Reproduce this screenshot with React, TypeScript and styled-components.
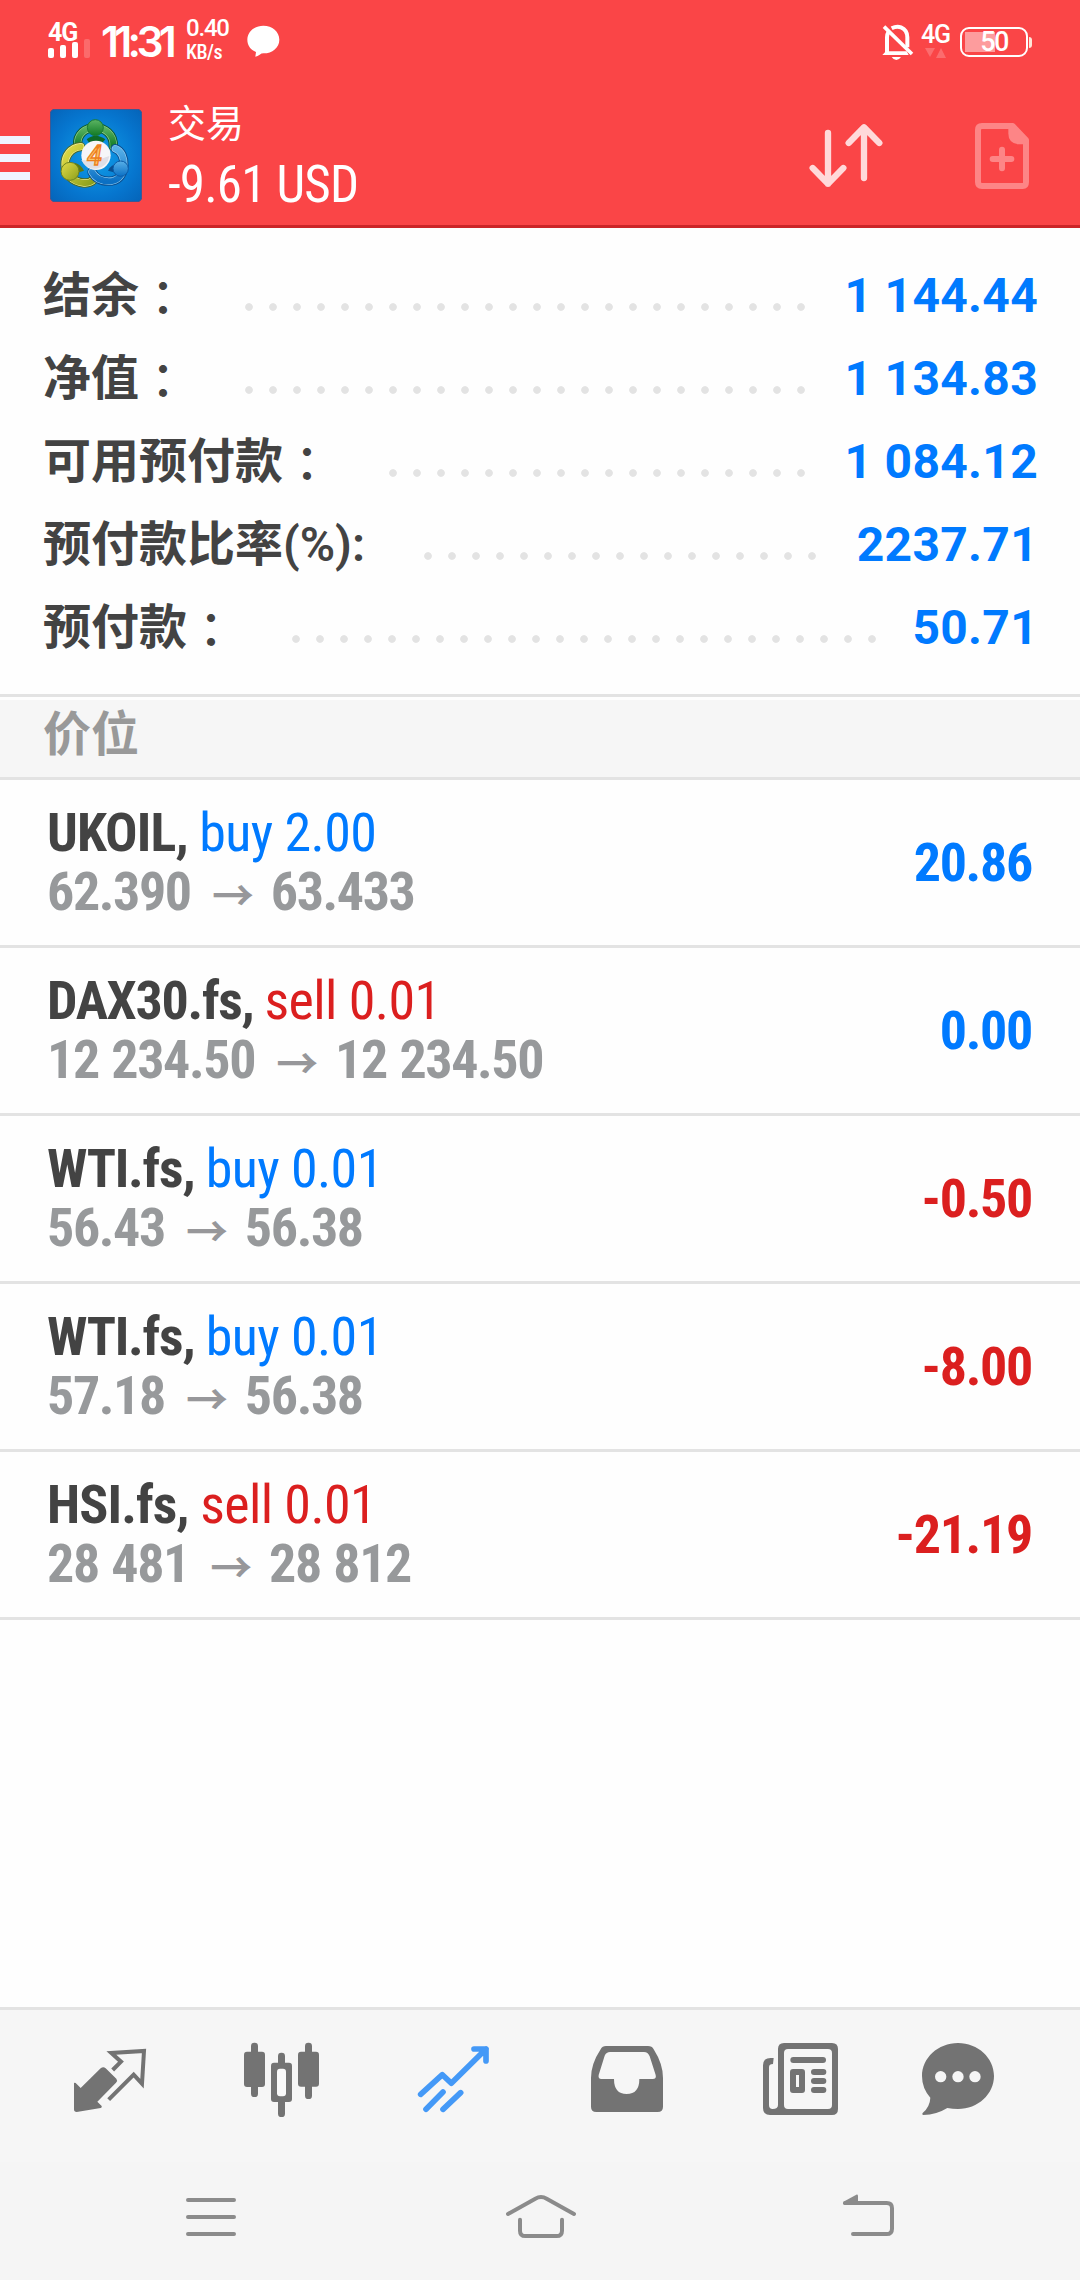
import React from "react";
import styled, { createGlobalStyle } from "styled-components";

const sans = `Roboto, "Noto Sans CJK SC", sans-serif`;
const condensed = `"Roboto Condensed", "Noto Sans CJK SC", sans-serif`;
const blue = "#007aff";
const red = "#db1f1f";
const ink = "#434343";
const line = "#e3e3e3";

const Global = createGlobalStyle`
  * { box-sizing: border-box; }
  body { margin: 0; background: #fefefe; font-family: ${sans}; }
  svg { display: block; flex: none; }
`;

const Screen = styled.div`
  display: flex;
  flex-direction: column;
  width: 1080px;
  height: 2280px;
  background: #fefefe;
`;

/* ---------- header ---------- */

const Header = styled.header`
  height: 228px;
  background: #fa4547;
  border-bottom: 3px solid #cb2528;
  color: #fff;
`;

const StatusBar = styled.div`
  display: flex;
  align-items: flex-start;
  height: 84px;
  padding: 17px 48px 0 48px;
`;

const Signal = styled.div`
  width: 53px;
  padding-top: 5px;
`;

const NetLabel = styled.div<{ $weight: number }>`
  font: ${(p) => p.$weight} 25px/22px Roboto, sans-serif;
  letter-spacing: -1.2px;
`;

const Bars = styled.div`
  display: flex;
  align-items: flex-end;
  gap: 6px;
  height: 14px;
`;

const Bar = styled.i<{ $h: number; $dim?: boolean }>`
  width: 6px;
  height: ${(p) => p.$h}px;
  border-radius: 2px;
  background: #fff;
  opacity: ${(p) => (p.$dim ? 0.2 : 1)};
`;

const Clock = styled.div`
  width: 85px;
  padding-top: 2px;
  font: 600 42.5px/46px Inter, Roboto, sans-serif;
  letter-spacing: -4.7px;
  white-space: nowrap;
`;

const Speed = styled.div`
  display: flex;
  flex-direction: column;
  width: 61px;
`;

const SpeedValue = styled.span`
  font: 500 24px/23px Roboto, sans-serif;
  letter-spacing: -1.2px;
`;

const SpeedUnit = styled.span`
  font: 500 20px/24px ${condensed};
  letter-spacing: -0.5px;
`;

const ChatMark = styled.div`
  padding-top: 8px;
`;

const StatusRight = styled.div`
  display: flex;
  align-items: flex-start;
  margin-left: auto;
`;

const DataLabel = styled.div`
  width: 39px;
  margin-left: 7px;
  padding-top: 7px;
`;

const Battery = styled.div`
  display: flex;
  align-items: center;
  justify-content: center;
  width: 68px;
  height: 30px;
  margin-top: 10px;
  border: 2px solid #fff;
  border-radius: 9px;
  background: linear-gradient(#fd9c9d, #fd9c9d) 3px 3px / 30px 20px no-repeat;
  font: 500 27px/26px Roboto, sans-serif;
  letter-spacing: -1.5px;
`;

const BatteryTip = styled.i`
  width: 3px;
  height: 11px;
  margin: 20px 0 0 1px;
  border-radius: 0 3px 3px 0;
  background: #ffe6d8;
`;

const Toolbar = styled.div`
  display: flex;
  align-items: flex-start;
  height: 141px;
  padding: 16px 45px 0 0;
`;

const Burger = styled.div`
  display: flex;
  flex-direction: column;
  gap: 10px;
  width: 30px;
  margin: 36px 20px 0 0;
`;

const BurgerLine = styled.i`
  height: 8px;
  background: #f0f4ff;
`;

const LogoFrame = styled.div`
  padding-top: 9px;
`;

const Titles = styled.div`
  display: flex;
  flex-direction: column;
  margin: 1px 0 0 26px;
`;

const Title = styled.h1`
  margin: 0;
  font: 400 38px/46px ${sans};
`;

const Total = styled.div`
  margin-top: 4px;
  font: 400 51px/68px ${condensed};
  letter-spacing: -0.8px;
`;

const Actions = styled.div`
  display: flex;
  gap: 89px;
  margin: 0 6px 0 auto;
  padding-top: 14px;
`;

/* ---------- account summary ---------- */

const Summary = styled.section`
  padding: 26px 42px 25px 43px;
  border-bottom: 3px solid ${line};
`;

const SummaryRow = styled.div`
  display: flex;
  height: 83px;
  font: 700 48px/83px ${sans};
`;

const SummaryLabel = styled.span`
  font-weight: 600;
  color: ${ink};
`;

const WideColon = styled.span`
  font-family: "Noto Sans CJK TC", sans-serif;
  font-weight: 500;
  line-height: 1;
  vertical-align: -4px;
`;

const Leader = styled.span<{ $dots: number; $gap: number }>`
  width: ${(p) => p.$dots * 24}px;
  height: 24px;
  margin: 41px ${(p) => p.$gap}px 0 auto;
  background: radial-gradient(circle at center, #e3e3e3 3.4px, transparent 4.2px) 0 0 / 24px 24px;
`;

const SummaryValue = styled.span`
  color: ${blue};
  letter-spacing: 0.3px;
`;

/* ---------- positions ---------- */

const SectionTitle = styled.h2`
  height: 80px;
  margin: 3px 0 0;
  padding: 0 43px;
  border-bottom: 3px solid ${line};
  background: #f6f6f6;
  color: #999;
  font: 600 48px/70px ${sans};
`;

const PositionRow = styled.div`
  display: flex;
  justify-content: space-between;
  height: 168px;
  padding: 0 48px 0 47px;
  border-bottom: 3px solid ${line};
  font-family: ${condensed};
`;

const PositionInfo = styled.div`
  padding-top: 23px;
`;

const Instrument = styled.div<{ $tracking: number }>`
  color: ${ink};
  font-size: 54px;
  font-weight: 700;
  line-height: 59px;
  letter-spacing: ${(p) => p.$tracking}px;
`;

const Deal = styled.span<{ $side: string }>`
  color: ${(p) => (p.$side === "buy" ? blue : red)};
  font-weight: 400;
  letter-spacing: -0.6px;
`;

const Prices = styled.div`
  display: flex;
  color: #97999b;
  font-size: 54px;
  font-weight: 700;
  line-height: 59px;
  letter-spacing: -1.4px;
  word-spacing: 1.5px;
`;

const Arrow = styled.span`
  width: 80px;
  padding-left: 3px;
  font: 700 42px/62px "Noto Sans CJK SC", sans-serif;
  text-align: center;
  color: #97979a;
`;

const Profit = styled.div<{ $loss: boolean }>`
  color: ${(p) => (p.$loss ? red : blue)};
  font-size: 54px;
  font-weight: 700;
  line-height: 166px;
  letter-spacing: -1.3px;
`;

/* ---------- bottom ---------- */

const Tabs = styled.nav`
  display: flex;
  height: 155px;
  margin-top: auto;
  padding: 20px 24px 0;
  border-top: 3px solid ${line};
  background: #f6f6f6;
`;

const Tab = styled.div`
  display: flex;
  flex: 1;
  justify-content: center;
`;

const SystemNav = styled.nav`
  display: flex;
  justify-content: space-between;
  height: 118px;
  padding: 8px 161px 0;
  background: #f5f5f5;
`;

const g = "#737373";
const n = "#8b8b8b";

const TabIcon = ({ x, children }: { x: number; children: React.ReactNode }) => (
  <Tab>
    <svg width="100" height="100" viewBox={`${x} 120 300 300`} fill={g}>
      {children}
    </svg>
  </Tab>
);

const Logo = () => (
  <svg width="92" height="93" viewBox="30 29 276 279">
    <defs>
      <radialGradient id="sky" cx="0.5" cy="0.5" r="0.75">
        <stop offset="0" stopColor="#10a0ea" />
        <stop offset="0.6" stopColor="#0676cf" />
        <stop offset="1" stopColor="#0560b4" />
      </radialGradient>
      <linearGradient id="green" x2="0" y2="1">
        <stop offset="0" stopColor="#5cb463" />
        <stop offset="1" stopColor="#117a25" />
      </linearGradient>
      <linearGradient id="yellow" x2="1" y2="1">
        <stop offset="0" stopColor="#e3dc48" />
        <stop offset="1" stopColor="#8c9f1c" />
      </linearGradient>
      <linearGradient id="azure" x2="0" y2="1">
        <stop offset="0" stopColor="#58b0e8" />
        <stop offset="1" stopColor="#0b70c4" />
      </linearGradient>
    </defs>
    <rect x="31" y="30" width="274" height="277" rx="13" fill="url(#sky)" stroke="#3d5791" strokeWidth="3" />
    <g fill="none" strokeLinecap="round">
      <path d="M113 140C106 66 224 66 220 142" stroke="#0b5c30" strokeWidth="28" />
      <path d="M113 140C106 66 224 66 220 142" stroke="#8fce8c" strokeWidth="22" />
      <path d="M113 140C106 66 224 66 220 142" stroke="url(#green)" strokeWidth="18" />
      <path d="M122 142C60 148 56 244 132 251Q150 252 160 242" stroke="#4b6a26" strokeWidth="28" />
      <path d="M122 142C60 148 56 244 132 251Q150 252 160 242" stroke="#f2ef9c" strokeWidth="22" />
      <path d="M122 142C60 148 56 244 132 251Q150 252 160 242" stroke="url(#yellow)" strokeWidth="18" />
      <path d="M226 148C262 160 262 238 216 245Q172 249 156 218" stroke="#0a4f91" strokeWidth="28" />
      <path d="M226 148C262 160 262 238 216 245Q172 249 156 218" stroke="#94cff2" strokeWidth="22" />
      <path d="M226 148C262 160 262 238 216 245Q172 249 156 218" stroke="url(#azure)" strokeWidth="18" />
    </g>
    <path d="M140 120Q166 98 196 120L184 134H150Z" fill="#0d6a26" />
    <circle cx="166" cy="85" r="24" fill="url(#green)" stroke="#1b7a35" strokeWidth="3" />
    <path d="M104 190Q124 196 132 214L108 222Z" fill="#5f7a12" />
    <circle cx="90" cy="216" r="27" fill="url(#yellow)" stroke="#6f8420" strokeWidth="3" />
    <path d="M204 214Q212 196 236 192L232 222Z" fill="#0a4f91" />
    <circle cx="242" cy="208" r="23" fill="url(#azure)" stroke="#0c5aa6" strokeWidth="3" />
    <circle cx="168" cy="168" r="44" fill="#f6f6f8" />
    <path d="M124 182L166 184L208 170A44 44 0 0 1 124 182Z" fill="#dfdfe6" />
    <text
      x="164"
      y="196"
      textAnchor="middle"
      fontFamily="Roboto, sans-serif"
      fontSize="80"
      fontWeight="500"
      fontStyle="italic"
      fill="#fcc56a"
      stroke="#ee7f1e"
      strokeWidth="4"
    >
      4
    </text>
  </svg>
);

type SummaryItem = { label: string; wide: boolean; dots: number; gap: number; value: string };

const summary: SummaryItem[] = [
  { label: "结余", wide: true, dots: 24, gap: 32, value: "1 144.44" },
  { label: "净值", wide: true, dots: 24, gap: 32, value: "1 134.83" },
  { label: "可用预付款", wide: true, dots: 18, gap: 32, value: "1 084.12" },
  { label: "预付款比率(%):", wide: false, dots: 17, gap: 33, value: "2237.71" },
  { label: "预付款", wide: true, dots: 25, gap: 28, value: "50.71" },
];

const positions = [
  { symbol: "UKOIL,", tracking: -0.9, side: "buy", lots: "2.00", open: "62.390", now: "63.433", profit: "20.86" },
  { symbol: "DAX30.fs,", tracking: -1.3, side: "sell", lots: "0.01", open: "12 234.50", now: "12 234.50", profit: "0.00" },
  { symbol: "WTI.fs,", tracking: -1.2, side: "buy", lots: "0.01", open: "56.43", now: "56.38", profit: "-0.50" },
  { symbol: "WTI.fs,", tracking: -1.2, side: "buy", lots: "0.01", open: "57.18", now: "56.38", profit: "-8.00" },
  { symbol: "HSI.fs,", tracking: -0.9, side: "sell", lots: "0.01", open: "28 481", now: "28 812", profit: "-21.19" },
];

export default function App() {
  return (
    <Screen>
      <Global />
      <Header>
        <StatusBar>
          <Signal>
            <NetLabel $weight={700}>4G</NetLabel>
            <Bars>
              <Bar $h={10} />
              <Bar $h={13} />
              <Bar $h={16} />
              <Bar $h={19} $dim />
            </Bars>
          </Signal>
          <Clock>11:31</Clock>
          <Speed>
            <SpeedValue>0.40</SpeedValue>
            <SpeedUnit>KB/s</SpeedUnit>
          </Speed>
          <ChatMark>
            <svg width="33" height="33" viewBox="740 76 99 99" fill="#fff">
              <path d="M789 78C816 78 837 96 837 120C837 144 816 161 790 161Q783 161 778 165Q772 170 765 171L767 157C751 150 741 137 741 120C741 96 762 78 789 78Z" />
            </svg>
          </ChatMark>
          <StatusRight>
            <svg width="32" height="45" viewBox="306 51 96 135" fill="none" stroke="#fff" strokeWidth="12">
              <path d="M321 160V112Q321 103 326 95M335 85Q350 77 363 82Q382 90 382 112V142" />
              <path d="M312 80L396 162" strokeWidth="11" />
              <path d="M307 165L321 150V154H380L386 165Z" fill="#fff" stroke="none" />
              <path d="M335 171H363Q357 180 349 180Q341 180 335 171Z" fill="#fff" stroke="none" />
            </svg>
            <DataLabel>
              <NetLabel $weight={500}>4G</NetLabel>
              <svg width="27" height="14" viewBox="0 0 27 14" fill="#fb6c6e">
                <path d="M4 2H14L9 11Z M15 12L20 2L25 12Z" />
              </svg>
            </DataLabel>
            <Battery>50</Battery>
            <BatteryTip />
          </StatusRight>
        </StatusBar>
        <Toolbar>
          <Burger>
            <BurgerLine />
            <BurgerLine />
            <BurgerLine />
          </Burger>
          <LogoFrame>
            <Logo />
          </LogoFrame>
          <Titles>
            <Title>交易</Title>
            <Total>-9.61 USD</Total>
          </Titles>
          <Actions>
            <svg width="78" height="75" viewBox="84 342 234 225" fill="none" stroke="#ffd9da" strokeWidth="19" strokeLinecap="round" strokeLinejoin="round">
              <path d="M144 399V551M98 504L144 551L190 504" />
              <path d="M252 534V382M206 429L252 382L298 429" />
            </svg>
            <svg width="54" height="75" viewBox="585 342 162 225">
              <g fill="none" stroke="#fd8586" strokeWidth="18" strokeLinecap="round" strokeLinejoin="round">
                <path d="M606 378H698L738 420V546Q738 558 728 558H606Q594 558 594 546V390Q594 378 606 378Z" />
                <path d="M638 477H694M666 449V505" />
              </g>
              <path d="M685 378H702L738 414V433H715Q685 430 685 400Z" fill="#fd8586" />
            </svg>
          </Actions>
        </Toolbar>
      </Header>

      <Summary>
        {summary.map((s) => (
          <SummaryRow key={s.label}>
            <SummaryLabel>
              {s.label}
              {s.wide && <WideColon>：</WideColon>}
            </SummaryLabel>
            <Leader $dots={s.dots} $gap={s.gap} />
            <SummaryValue>{s.value}</SummaryValue>
          </SummaryRow>
        ))}
      </Summary>

      <SectionTitle>价位</SectionTitle>
      {positions.map((p, i) => (
        <PositionRow key={i}>
          <PositionInfo>
            <Instrument $tracking={p.tracking}>
              {p.symbol}{" "}
              <Deal $side={p.side}>
                {p.side} {p.lots}
              </Deal>
            </Instrument>
            <Prices>
              <span>{p.open}</span>
              <Arrow>→</Arrow>
              <span>{p.now}</span>
            </Prices>
          </PositionInfo>
          <Profit $loss={p.profit.startsWith("-")}>{p.profit}</Profit>
        </PositionRow>
      ))}

      <Tabs>
        <TabIcon x={60}>
          <path d="M102 279Q106 277 110 282L122 294L182 235Q190 228 197 235L229 266Q234 272 228 278L172 335L185 348Q187 353 182 354L110 366Q102 366 102 358Z" />
          <path d="M218 240L243 215L214 189L312 183L306 281L281 254L206 329" fill="none" stroke={g} strokeWidth="12" />
        </TabIcon>
        <TabIcon x={576}>
          <rect x="633" y="158" width="21" height="163" rx="10" />
          <rect x="612" y="185" width="63" height="106" rx="9" />
          <rect x="795" y="158" width="21" height="169" rx="10" />
          <rect x="774" y="185" width="63" height="105" rx="9" />
          <rect x="714" y="188" width="21" height="193" rx="10" />
          <rect x="693" y="218" width="63" height="118" rx="9" />
          <rect x="711" y="236" width="27" height="83" rx="9" fill="#f9f9f9" />
        </TabIcon>
        <TabIcon x={1092}>
          <g fill="none" stroke="#4499f7" strokeWidth="17" strokeLinecap="round" strokeLinejoin="round">
            <path d="M1142 313L1207 254L1234 280L1338 177M1302 177H1338V213" />
            <path d="M1158 358L1209 306M1209 358L1262 308" />
          </g>
        </TabIcon>
        <TabIcon x={48}>
          <path
            fillRule="evenodd"
            d="M138 168H264Q276 168 281 178Q309 222 309 264V350Q309 366 293 366H109Q93 366 93 350V264Q93 222 122 178Q127 168 138 168ZM150 186Q139 186 134 197L116 255Q114 267 124 267H162Q162 312 200 312Q238 312 238 267H278Q290 267 287 255L269 199Q264 186 252 186Z"
          />
        </TabIcon>
        <TabIcon x={564}>
          <path fillRule="evenodd" d="M672 159H816Q834 159 834 177V357Q834 375 816 375H630Q609 375 609 354V226Q609 204 632 204H641L639 222Q627 222 627 232V345Q627 357 638 357Q654 357 654 345V177Q654 159 672 159ZM684 177Q672 177 672 189V345Q672 357 684 357H804Q816 357 816 345V189Q816 177 804 177Z" />
          <rect x="691" y="201" width="107" height="18" rx="9" />
          <path fillRule="evenodd" d="M699 237H726Q735 237 735 246V300Q735 309 726 309H699Q690 309 690 300V246Q690 237 699 237ZM708 255V291H717V255Z" />
          <rect x="753" y="237" width="46" height="18" rx="9" />
          <rect x="753" y="264" width="46" height="18" rx="9" />
          <rect x="753" y="291" width="46" height="18" rx="9" />
        </TabIcon>
        <TabIcon x={1080}>
          <path d="M1194 159C1254 159 1302 204 1302 258C1302 312 1254 357 1194 357Q1178 357 1162 354Q1130 374 1090 375Q1084 373 1088 369Q1110 350 1111 323Q1086 295 1086 258C1086 204 1134 159 1194 159Z" />
          <circle cx="1142" cy="260" r="17" fill="#f6f6f6" />
          <circle cx="1194" cy="260" r="17" fill="#f6f6f6" />
          <circle cx="1245" cy="260" r="17" fill="#f6f6f6" />
        </TabIcon>
      </Tabs>

      <SystemNav>
        <svg width="100" height="90" viewBox="363 540 300 270" fill="none" stroke={n} strokeWidth="12" strokeLinecap="round">
          <path d="M444 630H582M444 681H582M444 732H582" />
        </svg>
        <svg width="100" height="90" viewBox="0 0 300 270" fill="none" stroke={n} strokeWidth="12" strokeLinecap="round">
          <path d="M54 132L136 86Q153 76 170 86L252 132M90 149V182Q90 198 106 198H200Q216 198 216 182V149" />
        </svg>
        <svg width="100" height="90" viewBox="777 540 300 270" fill="none" stroke={n} strokeWidth="12" strokeLinecap="round">
          <path d="M879 732H980Q996 732 996 716V655Q996 639 980 639H856" />
          <path d="M849 641Q848 637 853 634L889 614Q894 613 894 618V645H855Q850 645 849 641Z" fill={n} stroke="none" />
        </svg>
      </SystemNav>
    </Screen>
  );
}
